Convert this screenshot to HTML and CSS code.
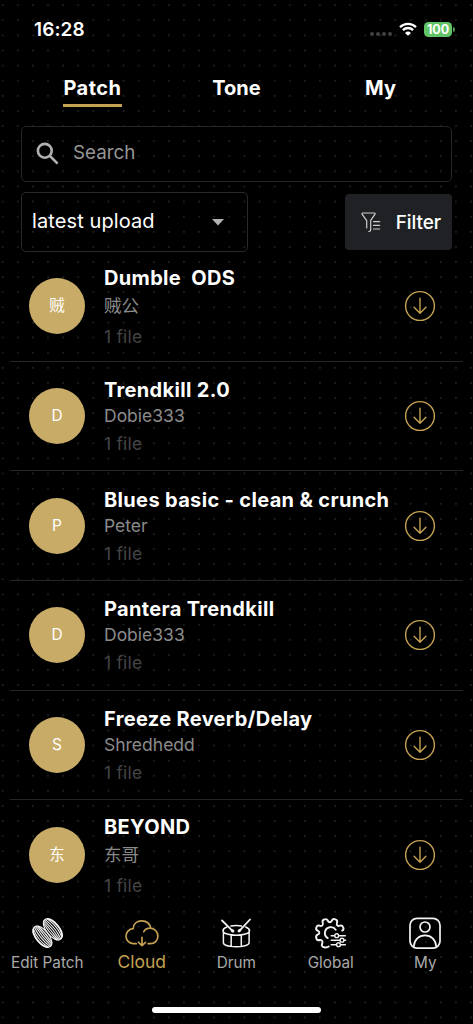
FILE: index.html
```html
<!DOCTYPE html>
<html lang="en">
<head>
    <meta charset="UTF-8">
    <meta name="viewport" content="width=device-width, initial-scale=1.0">
    <title>Cloud Patches</title>
    <link rel="stylesheet" href="styles.css">
</head>
<body>
    <!-- Shared icons -->
    <svg class="sprite" width="0" height="0">
        <symbol id="download" viewBox="0 0 32 32">
            <circle cx="16" cy="16" r="14.4"/>
            <path d="M16 8.3v14.6M10.1 17.3l5.900 5.900 5.900-5.900"/>
        </symbol>
        <symbol id="shell" viewBox="-14 -8 28 16" overflow="visible">
            <ellipse rx="12.600" ry="6.300" stroke-width="1.100"/>
            <path stroke-width="1.100" d="M-11.500-2.300Q0-6 11.500-2.300M-12.300-.4Q0-3.400 12.300-.4M-12.300 1Q0-.7 12.300 1M-11.700 2.300Q0 2 11.700 2.300M-10.500 3.500Q0 4.700 10.500 3.500"/>
            <path stroke-width="1.800" d="M-11.500-2.500C-8-7.400 8-7.400 11.500-2.500"/>
        </symbol>
    </svg>

    <!-- Status Bar -->
    <div class="status-bar">
        <span class="time">16:28</span>
        <div class="status-icons">
            <div class="signal"><i></i><i></i><i></i><i></i></div>
            <svg class="wifi" viewBox="0 0 18 14">
                <path d="M1 5.1a11.4 11.4 0 0 1 16 0M3.9 8.1a7.3 7.3 0 0 1 10.2 0" fill="none" stroke="#fff" stroke-width="2.3"/>
                <path d="M9 13.8L6 10.9a4.3 4.3 0 0 1 6 0z" fill="#fff"/>
            </svg>
            <div class="battery">100</div>
        </div>
    </div>

    <!-- Tabs -->
    <div class="tabs">
        <div class="tab active"><span>Patch</span></div>
        <div class="tab"><span>Tone</span></div>
        <div class="tab"><span>My</span></div>
    </div>

    <!-- Search -->
    <div class="search">
        <svg viewBox="0 0 24 24">
            <circle cx="8.8" cy="8.8" r="6.9"/>
            <path d="M13.8 13.8l7.8 7.8"/>
        </svg>
        <span>Search</span>
    </div>

    <!-- Sort and Filter -->
    <div class="controls">
        <div class="sort">
            <span>latest upload</span>
            <svg viewBox="0 0 12 7"><path d="M0 0h12L6 6.5z"/></svg>
        </div>
        <div class="filter">
            <svg viewBox="0 0 20 21">
                <path d="M1.700 1h11.700q1 0 .6 1.200L9.700 8.300v9.300q0 1.900-1.900 1.900M5.700 16V8.600L1.200 2.400Q.6 1 1.700 1M12.500 9.600h6.200M12.500 13.300h6.200M12.500 17h6.200"/>
            </svg>
            <span>Filter</span>
        </div>
    </div>

    <!-- Patch List -->
    <div class="patch-list">
        <div class="patch">
            <div class="avatar">贼</div>
            <div class="info">
                <div class="title">Dumble&nbsp; ODS</div>
                <div class="author cjk">贼公</div>
                <div class="files">1 file</div>
            </div>
            <svg class="download"><use href="#download"/></svg>
        </div>
        <div class="patch">
            <div class="avatar">D</div>
            <div class="info">
                <div class="title">Trendkill 2.0</div>
                <div class="author">Dobie333</div>
                <div class="files">1 file</div>
            </div>
            <svg class="download"><use href="#download"/></svg>
        </div>
        <div class="patch">
            <div class="avatar">P</div>
            <div class="info">
                <div class="title">Blues basic - clean &amp; crunch</div>
                <div class="author">Peter</div>
                <div class="files">1 file</div>
            </div>
            <svg class="download"><use href="#download"/></svg>
        </div>
        <div class="patch">
            <div class="avatar">D</div>
            <div class="info">
                <div class="title">Pantera Trendkill</div>
                <div class="author">Dobie333</div>
                <div class="files">1 file</div>
            </div>
            <svg class="download"><use href="#download"/></svg>
        </div>
        <div class="patch">
            <div class="avatar">S</div>
            <div class="info">
                <div class="title">Freeze Reverb/Delay</div>
                <div class="author">Shredhedd</div>
                <div class="files">1 file</div>
            </div>
            <svg class="download"><use href="#download"/></svg>
        </div>
        <div class="patch">
            <div class="avatar">东</div>
            <div class="info">
                <div class="title">BEYOND</div>
                <div class="author cjk">东哥</div>
                <div class="files">1 file</div>
            </div>
            <svg class="download"><use href="#download"/></svg>
        </div>
    </div>

    <!-- Bottom Navigation -->
    <div class="bottom-nav">
        <div class="nav-item">
            <svg viewBox="0 0 34 34">
                <g transform="translate(22.700 13.400) rotate(51)"><use href="#shell" x="-14" y="-8" width="28" height="16"/></g>
                <g transform="translate(12.500 20.600) rotate(231)"><use href="#shell" x="-14" y="-8" width="28" height="16"/></g>
            </svg>
            <span>Edit Patch</span>
        </div>
        <div class="nav-item active">
            <svg viewBox="0 0 34 34">
                <path stroke-width="1.7" d="M11.200 27.700H8.800a7.500 7.500 0 0 1-.6-15C8.300 7.500 12.200 4.800 16.800 4.800c4.500 0 8 2.800 8.900 7.400 4.100.5 7.200 3.800 7.200 7.800 0 4.600-3.300 7.700-7.400 7.700h-2.300M18.800 15.700c1.200-2.300 3.700-3.700 6.900-3.500M17 21.300v8.300M13.500 26.400l3.500 3.300 3.500-3.300"/>
            </svg>
            <span>Cloud</span>
        </div>
        <div class="nav-item">
            <svg viewBox="0 0 34 34">
                <g stroke-width="1.5">
                    <path d="M7.800 11C2.500 13 2.800 16.500 8 18c5 1.600 13.500 1.600 18.500 0 5.200-1.500 5.500-5 .2-7M12 10c3-.6 7.500-.6 10.500 0M4.400 14.500v12.300c0 5.200 25.700 5.200 25.700 0V14.500M12.200 19v11.300M22.300 19v11.300"/>
                    <path stroke-width="1.800" d="M3 4.500l9.500 9.300M31 3.500L21.300 13.800"/>
                </g>
                <g fill="#f2f2f2" stroke="none">
                    <ellipse cx="13.500" cy="14.800" rx="2" ry="1.500" transform="rotate(35 13.500 14.800)"/>
                    <ellipse cx="20.500" cy="14.600" rx="2" ry="1.500" transform="rotate(-35 20.500 14.600)"/>
                </g>
            </svg>
            <span>Drum</span>
        </div>
        <div class="nav-item">
            <svg viewBox="0 0 34 34">
                <path stroke-width="1.900" d="M14.800 30.400c-.9.900-1.800.8-2.600 1-1.400.3-2.600-.2-3.600-.8-1.500-1-.7-2.300-.3-3.400.8-2.200-.8-3.800-2.900-3.200-1.800.5-2.500.2-3-1.400-.8-2.200-.3-3.200 1.200-3.900 2.300-1 2.300-3.100 0-4.100-1.600-.7-1.900-1.700-1.100-3.600.7-1.700 1.700-1.900 3.200-1.300 2.300.8 3.900-.6 3-3-.6-1.600-.2-2.500 1.500-3.200 1.800-.8 2.800-.5 3.500 1 1 2.300 3.100 2.300 4.200 0 .7-1.500 1.700-1.800 3.500-1.100 1.800.7 2.200 1.700 1.600 3.300-.8 2.300.7 3.800 3 3 1.500-.5 2.400-.2 3.100 1.400.8 1.700.5 2.800-.9 3.500"/>
                <path stroke-width="1.900" d="M21.700 13.800c-3-4.300-9.600-3.100-10.700 2.100-.5 2.600.6 4.900 2.700 6.200"/>
                <path stroke-width="1.500" d="M17.200 19.700h3.100M25.300 19.700h6M17.200 24.200h8.300M30.500 24.200h1.100M17.200 28.700h4.900M27 28.700h4.300"/>
                <g stroke-width="1.400"><circle cx="22.700" cy="19.700" r="1.900"/><circle cx="28" cy="24.200" r="1.900"/><circle cx="24.500" cy="28.700" r="1.900"/></g>
            </svg>
            <span>Global</span>
        </div>
        <div class="nav-item">
            <svg viewBox="0 0 34 34">
                <g stroke-width="1.700">
                    <rect x="2" y="2.300" width="30" height="29.800" rx="7"/>
                    <circle cx="17" cy="11" r="5"/>
                    <path d="M5.800 30.500C6.200 23.500 11 19.300 17 19.300s10.800 4.200 11.200 11.200"/>
                </g>
            </svg>
            <span>My</span>
        </div>
    </div>
    <div class="home-indicator"></div>
</body>
</html>
```
FILE: styles.css
```css
/* Reset */
* {
    box-sizing: border-box;
}

body {
    margin: 0;
    width: 473px;
    height: 1024px;
    overflow: hidden;
    display: flex;
    flex-direction: column;
    font-family: 'Inter', 'Noto Sans CJK SC', sans-serif;
    color: #fff;
    background-color: #000;
    background-image: radial-gradient(circle, #1d1d1d 0.7px, transparent 1.5px);
    background-size: 15.12px 15.12px;
    background-position: -4.9px -2.4px;
}

svg {
    display: block;
    fill: none;
    stroke-linecap: round;
    stroke-linejoin: round;
}

.sprite {
    position: absolute;
}

/* Status Bar */
.status-bar {
    height: 60px;
    flex: none;
    display: flex;
    align-items: center;
    justify-content: space-between;
    padding: 0 18px 0 34px;
}

.time {
    margin-top: -1px;
    font-size: 19px;
    font-weight: 600;
    letter-spacing: 0.1px;
}

.status-icons {
    display: flex;
    align-items: center;
}

.signal {
    display: flex;
    gap: 2px;
    margin: 7px 7px 0 0;
}

.signal i {
    width: 4px;
    height: 4px;
    border-radius: 50%;
    background: #424242;
}

.wifi {
    width: 18px;
    height: 14px;
    margin: -2px 7px 0 0;
    stroke-linecap: butt;
}

.battery {
    position: relative;
    width: 28px;
    height: 15px;
    margin: -1px 3px 0 0;
    border-radius: 4.5px;
    background: #61c466;
    font-size: 12.5px;
    font-weight: 700;
    line-height: 15px;
    text-align: center;
}

.battery::after {
    content: '';
    position: absolute;
    right: -3px;
    top: 5px;
    width: 2px;
    height: 5px;
    border-radius: 0 2px 2px 0;
    background: #4b9650;
}

/* Tabs */
.tabs {
    height: 66px;
    flex: none;
    display: grid;
    grid-template-columns: 143px 1fr 143px;
    padding: 13px 21px 0;
    text-align: center;
}

.tab span {
    display: inline-block;
    height: 34px;
    line-height: 30px;
    font-size: 20px;
    font-weight: 700;
}

.tab.active span {
    border-bottom: 3px solid #c5a253;
    letter-spacing: 0.5px;
}

/* Search */
.search {
    height: 56px;
    flex: none;
    margin: 0 21px;
    padding: 0 14px;
    display: flex;
    align-items: center;
    gap: 13px;
    border: 1.5px solid #252525;
    border-radius: 5px;
    color: #969696;
    font-size: 18.8px;
}

.search svg {
    width: 24px;
    height: 24px;
    stroke: #b2b2b2;
    stroke-width: 2.6;
    stroke-linecap: butt;
}

.search span {
    margin-top: -4px;
}

/* Sort and Filter */
.controls {
    flex: none;
    display: flex;
    align-items: center;
    justify-content: space-between;
    margin: 10px 21px 0;
}

.sort {
    width: 227px;
    height: 60px;
    display: flex;
    align-items: center;
    justify-content: space-between;
    padding: 0 23px 0 10px;
    border: 1.5px solid #292929;
    border-radius: 5px;
    font-size: 20px;
    letter-spacing: 0.1px;
}

.sort span {
    margin-top: -3px;
}

.sort svg {
    width: 12px;
    height: 7px;
    fill: #b2b2b2;
}

.filter {
    width: 107px;
    height: 56px;
    display: flex;
    align-items: center;
    justify-content: space-between;
    padding: 0 11px 0 16px;
    border-radius: 4px;
    background: #202124;
    font-size: 19px;
    font-weight: 500;
    letter-spacing: -0.1px;
}

.filter svg {
    width: 20px;
    height: 21px;
    stroke: #cfcfcf;
    stroke-width: 1.2;
}

/* Patch List */
.patch-list {
    flex: none;
    height: 658px;
    padding: 0 10px;
}

.patch {
    height: 109.67px;
    display: flex;
    align-items: center;
    padding: 0 27px 0 19px;
    border-bottom: 1px solid #252525;
}

.patch:last-child {
    border-bottom: none;
}

.avatar {
    width: 56px;
    height: 56px;
    border-radius: 50%;
    background: #c8ab66;
    font-size: 15.5px;
    line-height: 56px;
    text-align: center;
}

.info {
    flex: 1;
    margin-left: 19px;
}

.title {
    font-size: 20px;
    font-weight: 700;
    line-height: 27px;
    letter-spacing: 0.34px;
    white-space: nowrap;
}

.author {
    font-size: 17.5px;
    line-height: 23px;
    color: #8a8a8a;
}

.author.cjk {
    line-height: 28px;
}

.files {
    margin-top: 5px;
    font-size: 17.5px;
    line-height: 23px;
    letter-spacing: 0.2px;
    color: #444;
}

.download {
    width: 32px;
    height: 32px;
    stroke: #c5a253;
    stroke-width: 1.4;
}

/* Bottom Navigation */
.bottom-nav {
    flex: none;
    display: grid;
    grid-template-columns: repeat(5, 94.5px);
    height: 80px;
    padding-top: 6px;
}

.nav-item {
    display: flex;
    flex-direction: column;
    align-items: center;
    color: #a9a9a9;
    font-size: 15.3px;
    line-height: 26px;
    white-space: nowrap;
}

.nav-item svg {
    width: 34px;
    height: 34px;
    stroke: #f2f2f2;
}

.nav-item.active {
    color: #c5a253;
    font-size: 17.5px;
    line-height: 23px;
}

.nav-item.active svg {
    stroke: #c5a253;
}

/* Home Indicator */
.home-indicator {
    flex: none;
    width: 169px;
    height: 6px;
    margin: 17px auto 0;
    border-radius: 3px;
    background: #fff;
}
```
